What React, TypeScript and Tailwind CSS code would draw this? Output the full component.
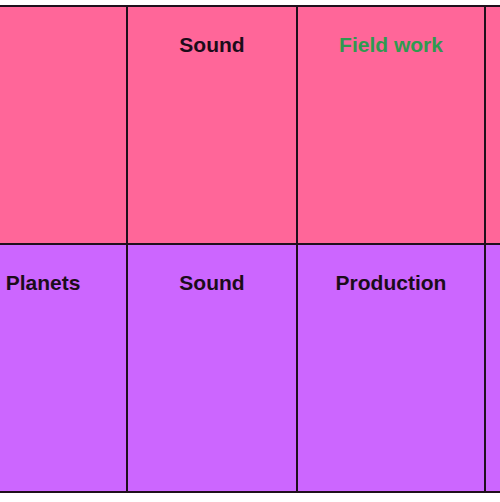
import React from 'react'

// Zeilen der Tabelle: Farbe + Zellen (erste Spalte ist links abgeschnitten)
const rows = [
  {
    bg: 'bg-[#ff6699]',
    h: 'h-[236px]',
    cells: [
      { text: '', green: false },
      { text: 'Sound', green: false },
      { text: 'Field work', green: true },
      { text: '', green: false },
    ],
  },
  {
    bg: 'bg-[#cc66ff]',
    h: 'h-[246px]',
    cells: [
      { text: 'Planets', green: false },
      { text: 'Sound', green: false },
      { text: 'Production', green: false },
      { text: '', green: false },
    ],
  },
]

export default function App() {
  return (
    <div className="w-[500px] h-[502px] bg-white overflow-hidden pt-[5px]" style={{ fontFamily: '"Liberation Sans", Arial, sans-serif' }}>
      <div className="-ml-[42px] w-[760px] bg-[#1f0f1c] p-[2px] grid grid-cols-[166px_168px_186px_230px] gap-[2px]">
        {rows.map((row, ri) =>
          row.cells.map((cell, ci) => (
            <div key={`${ri}-${ci}`} className={`${row.bg} ${row.h} pt-[22px] text-center`}>
              <span className={`text-[21px] font-bold ${cell.green ? 'text-[#2f9a50]' : 'text-[#1c0c1a]'}`}>
                {cell.text}
              </span>
            </div>
          ))
        )}
      </div>
    </div>
  )
}
